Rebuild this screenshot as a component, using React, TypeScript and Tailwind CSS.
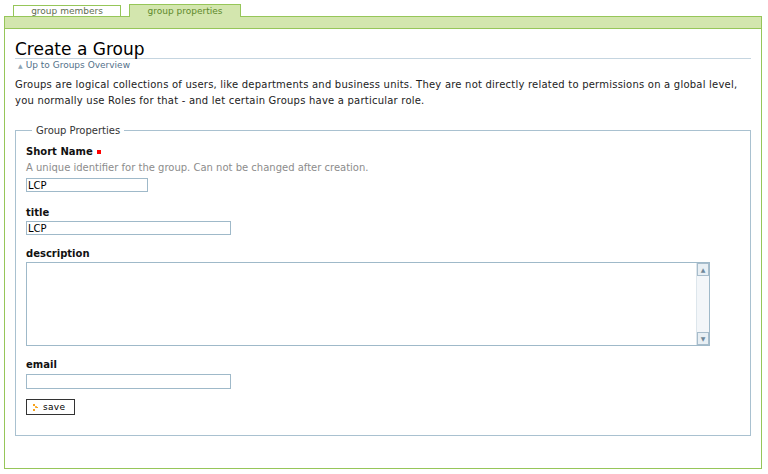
import React from 'react';

const green = 'border-[#96c659]';

const Label: React.FC<{ text: string; required?: boolean; className?: string }> = ({ text, required, className }) => (
  <div className={`flex items-center gap-[4px] text-[10px] leading-[14px] font-bold text-[#111] ${className ?? ''}`}>
    {text}
    {required && <span className="w-[4px] h-[4px] bg-[#ff0000] inline-block" />}
  </div>
);

const TextInput: React.FC<{ value?: string; className?: string }> = ({ value = '', className }) => (
  <input
    readOnly
    value={value}
    className={`block border border-[#9fb9c9] bg-white px-[1px] text-[10px] leading-[12px] text-black outline-none font-['DejaVu_Sans',sans-serif] ${className ?? ''}`}
  />
);

export default function App() {
  return (
    <div className="w-[768px] h-[474px] bg-white font-['DejaVu_Sans',Verdana,sans-serif] text-[#222] overflow-hidden">
      {/* tabs */}
      <div className="relative z-10 flex items-end gap-[8px] pl-[13px] h-[17px] -mb-px">
        <div className={`w-[108px] h-[11px] mb-[1px] border border-b-0 ${green} bg-white text-center text-[9px] leading-[11px] text-[#5f6d52]`}>
          group members
        </div>
        <div className={`w-[112px] h-[13px] border border-b-0 ${green} bg-[#d3e6ae] text-center text-[9px] leading-[12px] text-[#5e8a2c]`}>
          group properties
        </div>
      </div>

      {/* main box */}
      <div className={`ml-[4px] w-[758px] h-[453px] border ${green}`}>
        <div className={`h-[12px] bg-[#d3e6ae] border-b ${green}`} />

        <div className="px-[10px]">
          <h1 className="mt-[11px] h-[19px] border-b border-[#c5d5e0] text-[17px] leading-[19px] text-black font-normal">
            Create a Group
          </h1>
          <div className="h-[11px] mt-[1px] pl-[3px] flex items-center gap-[3px] text-[9px] leading-[11px] text-[#54708a]">
            <span className="text-[6px] text-[#8ea3b4]">▲</span>
            Up to Groups Overview
          </div>
          <p className="mt-[6px] text-[10px] leading-[16px] tracking-[0.22px] text-[#222]">
            Groups are logical collections of users, like departments and business units. They are not directly related to permissions on a global level,
            you normally use Roles for that - and let certain Groups have a particular role.
          </p>

          <fieldset className="mt-[15px] border border-[#a9c1d0] px-[10px] pt-[8px] pb-[20px]">
            <legend className="ml-[6px] px-[4px] text-[10px] leading-[13px] text-[#333]">Group Properties</legend>

            <Label text="Short Name" required />
            <div className="mt-[2px] text-[10px] leading-[14px] text-[#8c8c8c]">
              A unique identifier for the group. Can not be changed after creation.
            </div>
            <TextInput value="LCP" className="mt-[3px] w-[122px] h-[14px]" />

            <Label text="title" className="mt-[14px]" />
            <TextInput value="LCP" className="mt-[1px] w-[205px] h-[14px]" />

            <Label text="description" className="mt-[12px]" />
            <div className="mt-[1px] w-[684px] h-[84px] border border-[#9fb9c9] flex">
              <div className="flex-1" />
              <div className="w-[13px] flex flex-col bg-[#f3f6f9] border-l border-[#dde6ec]">
                <div className="h-[13px] border border-[#a7bccb] bg-[#e8eff4] flex items-center justify-center text-[6px] leading-none text-[#6f8799]">
                  ▲
                </div>
                <div className="flex-1" />
                <div className="h-[13px] border border-[#a7bccb] bg-[#e8eff4] flex items-center justify-center text-[6px] leading-none text-[#6f8799]">
                  ▼
                </div>
              </div>
            </div>

            <Label text="email" className="mt-[12px]" />
            <TextInput className="mt-[2px] w-[205px] h-[15px]" />

            <button className="mt-[10px] w-[49px] h-[16px] border border-[#333] bg-white flex items-center pl-[6px] gap-[5px] text-[9px] leading-none tracking-[0.3px] text-black">
              <svg width="5" height="7" viewBox="0 0 5 7">
                <rect x="0" y="0" width="2" height="2" fill="#f7a21b" />
                <rect x="2" y="2" width="2" height="2" fill="#f7b84a" />
                <rect x="3" y="3" width="2" height="1" fill="#f7a21b" />
                <rect x="0" y="5" width="2" height="2" fill="#f7a21b" />
              </svg>
              save
            </button>
          </fieldset>
        </div>
      </div>
    </div>
  );
}
